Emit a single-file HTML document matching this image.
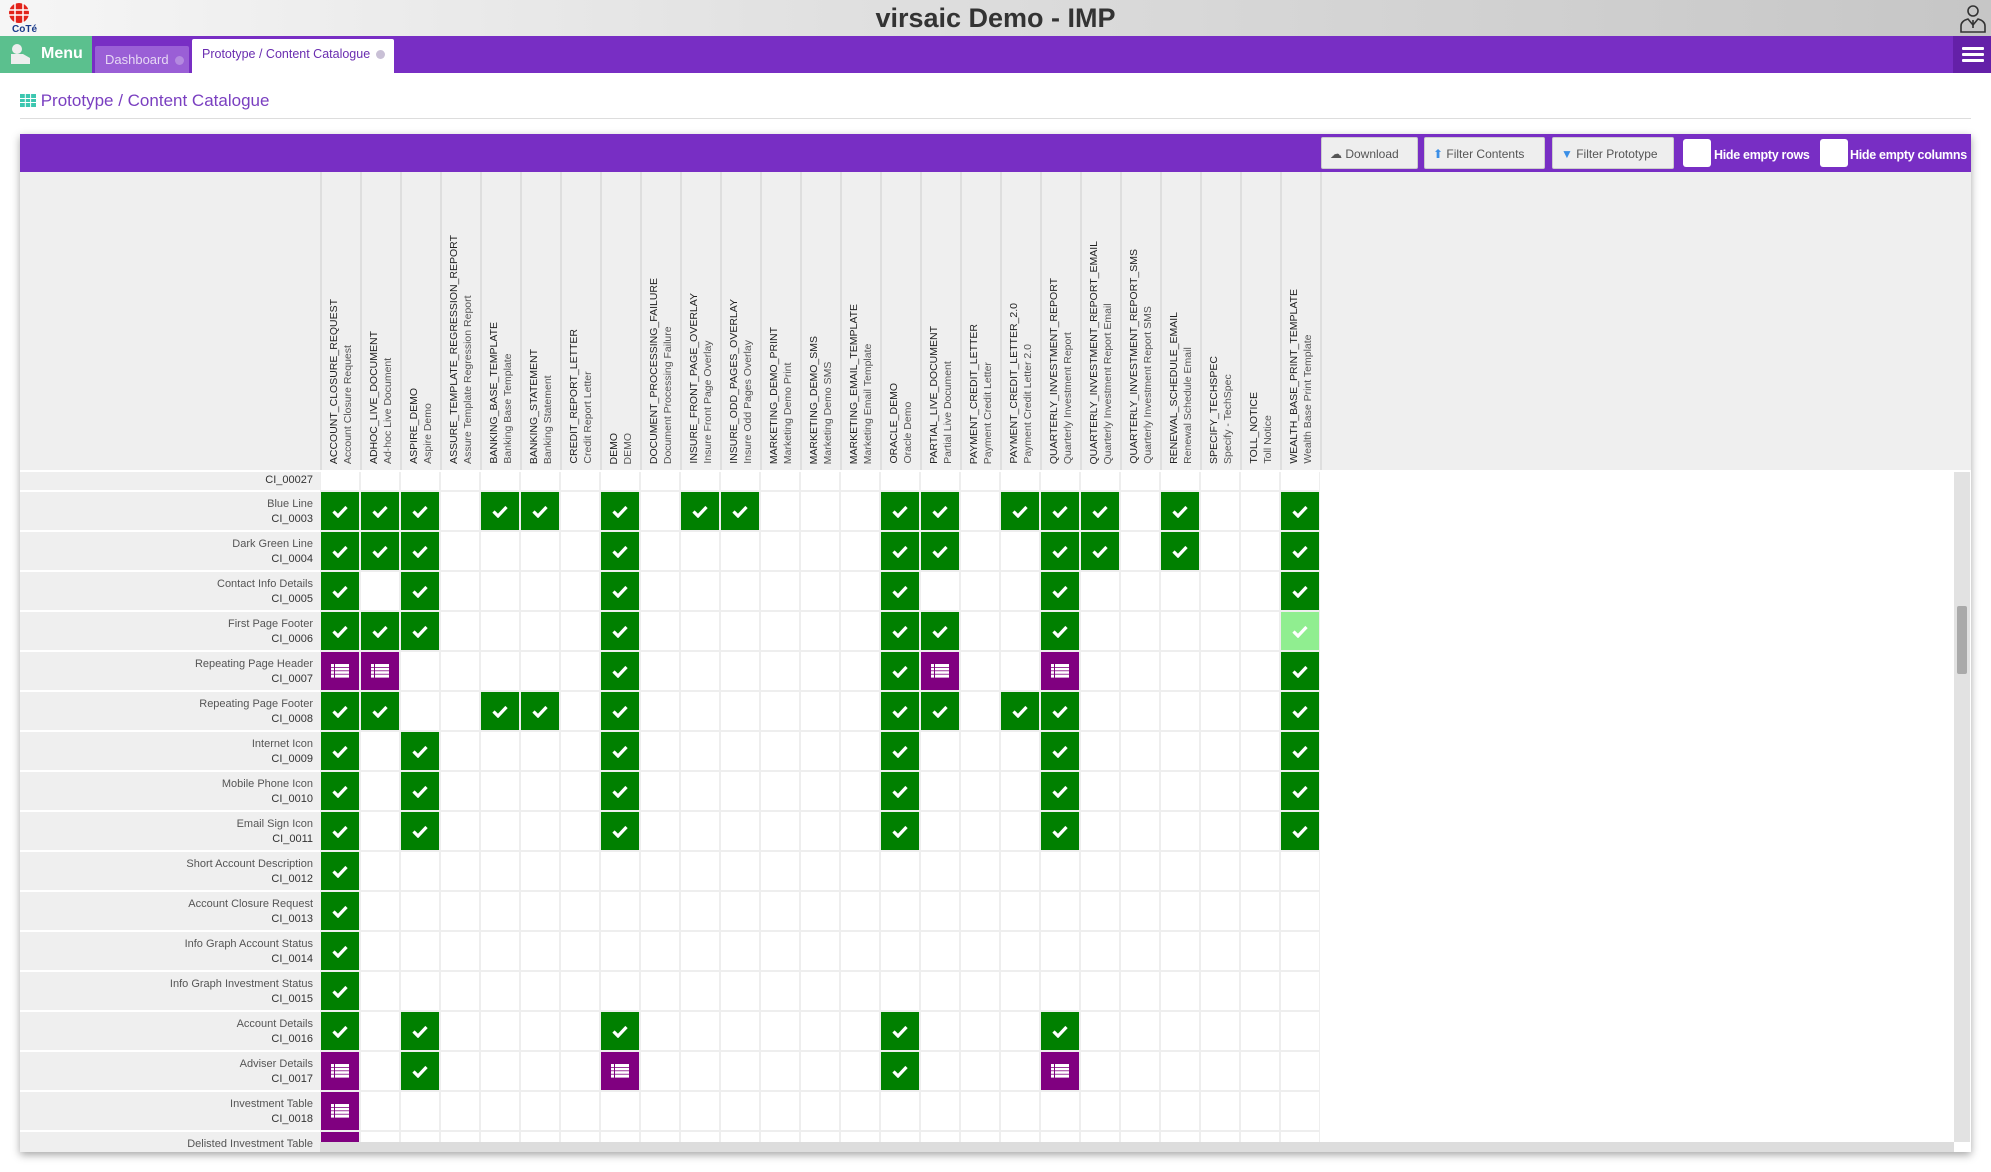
<!DOCTYPE html>
<html><head><meta charset="utf-8">
<style>
*{box-sizing:border-box;margin:0;padding:0}
body{width:1991px;height:1172px;overflow:hidden;background:#fff;font-family:"Liberation Sans",sans-serif;position:relative}
.top{position:absolute;left:0;top:0;width:1991px;height:36px;background:linear-gradient(to right,#f6f6f6,#dcdcdc 50%,#c6c6c6)}
.top h1{position:absolute;left:0;width:1991px;top:3px;text-align:center;font-size:27px;font-weight:bold;color:#333}
.nav{position:absolute;left:0;top:36px;width:1991px;height:37px;background:#782ec4}
.menu{position:absolute;left:0;top:0;width:92px;height:37px;background:#5bc08e;color:#fff;font-size:16px;font-weight:bold}
.tab1{position:absolute;left:95px;top:10px;width:94px;height:27px;background:#9a5fd6;color:#e6d8f4;font-size:13px;padding:6px 0 0 10px;border-radius:2px 2px 0 0}
.tab2{position:absolute;left:192px;top:3px;width:202px;height:34px;background:#fff;color:#6a2db0;font-size:12.5px;padding:8px 0 0 10px;border-radius:2px 2px 0 0}
.x{display:inline-block;width:9px;height:9px;border-radius:50%;background:#c9c0d6;margin-left:6px;vertical-align:-1px}
.ham{position:absolute;right:0;top:0;width:38px;height:37px;background:#6420a8}
.ham i{position:absolute;left:9px;width:22px;height:3px;background:#fff;border-radius:1px}
.ptitle{position:absolute;left:20px;top:91px;font-size:17px;color:#7a3fc0}
.hr{position:absolute;left:20px;top:118px;width:1951px;height:1px;background:#ddd}
.card{position:absolute;left:20px;top:134px;width:1951px;height:1018px;box-shadow:0 3px 8px rgba(0,0,0,.35);background:#fff;overflow:hidden}
.bar{position:absolute;left:0;top:0;width:1951px;height:38px;background:#782ec4}
.btn{position:absolute;top:3px;height:32px;background:#eee;border:1px solid #ccc;border-radius:2px;color:#555;font-size:12px;padding:9px 0 0 8px}
.cb{position:absolute;top:5px;width:28px;height:28px;background:#fff;border-radius:3px}
.lbl{position:absolute;top:14px;color:#fff;font-size:12.5px;font-weight:bold;letter-spacing:-.3px}
.head{position:absolute;left:0;top:38px;width:1951px;height:298px;background:#efefef}
.hc{position:absolute;top:0;width:40px;height:298px;border-left:2px solid #dedede}
.hc div{position:absolute;left:5px;bottom:6px;writing-mode:vertical-rl;transform:rotate(180deg);font-size:10.5px;line-height:14px;color:#222;white-space:nowrap}
.hc div span{color:#555;font-size:10.5px}
.rows{position:absolute;left:0;top:338px;width:300px}
.rl{position:absolute;left:0;width:300px;height:38px;background:#efefef;text-align:right;padding-right:7px;font-size:11px;line-height:15px;color:#555;padding-top:5px}
.rl b{font-weight:normal;color:#333}
.vs{position:absolute;left:1934px;top:338px;width:16px;height:670px;background:#e2e2e2}
.vs i{position:absolute;left:3px;top:134px;width:10px;height:68px;background:#aaa;border-radius:2px}
.hs{position:absolute;left:300px;top:1008px;width:1634px;height:10px;background:#ddd}
</style></head><body>
<div class="top">
<svg style="position:absolute;left:3px;top:2px" width="40" height="32" viewBox="0 0 40 32"><circle cx="16" cy="11" r="10" fill="#e2231a"/><path d="M6 8h20M6 13h20M12 1v20M20 1v20" stroke="#fff" stroke-width="1.5"/><text x="9" y="30" font-size="10" font-weight="bold" fill="#1a3a8a" font-family="Liberation Sans">CoTé</text></svg>
<h1>virsaic Demo - IMP</h1>
<svg style="position:absolute;left:1958px;top:3px" width="30" height="30" viewBox="0 0 30 30" fill="none" stroke="#333" stroke-width="1.6"><circle cx="15" cy="8" r="5"/><path d="M3 29v-6q0-5 7-7l5 6 5-6q7 2 7 7v6z"/><path d="M15 17v8"/></svg>
</div>
<div class="nav">
<div class="menu"><svg style="position:absolute;left:10px;top:7px" width="22" height="22" viewBox="0 0 22 22" fill="#eee"><circle cx="7" cy="6" r="5"/><path d="M1 21V11h12l7 4v6z"/></svg><span style="position:absolute;left:41px;top:9px">Menu</span></div>
<div class="tab1">Dashboard<span class="x" style="background:#b48ae0"></span></div>
<div class="tab2">Prototype / Content Catalogue<span class="x"></span></div>
<div class="ham"><i style="top:11px"></i><i style="top:17px"></i><i style="top:23px"></i></div>
</div>
<div class="ptitle"><svg width="16" height="13" viewBox="0 0 16 13" style="vertical-align:-1px"><rect width="16" height="13" fill="#3cc7b0"/><path d="M0 4.5h16M0 8.5h16M5.3 0v13M10.6 0v13" stroke="#fff" stroke-width="1"/></svg> Prototype / Content Catalogue</div>
<div class="hr"></div>
<div class="card">
<div class="bar">
<div class="btn" style="left:1301px;width:97px">☁ Download</div>
<div class="btn" style="left:1404px;width:121px"><span style="color:#3a8ee6">⬆</span> Filter Contents</div>
<div class="btn" style="left:1532px;width:122px"><span style="color:#3a8ee6">▼</span> Filter Prototype</div>
<div class="cb" style="left:1663px"></div><div class="lbl" style="left:1694px">Hide empty rows</div>
<div class="cb" style="left:1800px"></div><div class="lbl" style="left:1830px">Hide empty columns</div>
</div>
<div class="head" id="head">
<div class="hc" style="left:300px"><div>ACCOUNT_CLOSURE_REQUEST<br><span>Account Closure Request</span></div></div>
<div class="hc" style="left:340px"><div>ADHOC_LIVE_DOCUMENT<br><span>Ad-hoc Live Document</span></div></div>
<div class="hc" style="left:380px"><div>ASPIRE_DEMO<br><span>Aspire Demo</span></div></div>
<div class="hc" style="left:420px"><div>ASSURE_TEMPLATE_REGRESSION_REPORT<br><span>Assure Template Regression Report</span></div></div>
<div class="hc" style="left:460px"><div>BANKING_BASE_TEMPLATE<br><span>Banking Base Template</span></div></div>
<div class="hc" style="left:500px"><div>BANKING_STATEMENT<br><span>Banking Statement</span></div></div>
<div class="hc" style="left:540px"><div>CREDIT_REPORT_LETTER<br><span>Credit Report Letter</span></div></div>
<div class="hc" style="left:580px"><div>DEMO<br><span>DEMO</span></div></div>
<div class="hc" style="left:620px"><div>DOCUMENT_PROCESSING_FAILURE<br><span>Document Processing Failure</span></div></div>
<div class="hc" style="left:660px"><div>INSURE_FRONT_PAGE_OVERLAY<br><span>Insure Front Page Overlay</span></div></div>
<div class="hc" style="left:700px"><div>INSURE_ODD_PAGES_OVERLAY<br><span>Insure Odd Pages Overlay</span></div></div>
<div class="hc" style="left:740px"><div>MARKETING_DEMO_PRINT<br><span>Marketing Demo Print</span></div></div>
<div class="hc" style="left:780px"><div>MARKETING_DEMO_SMS<br><span>Marketing Demo SMS</span></div></div>
<div class="hc" style="left:820px"><div>MARKETING_EMAIL_TEMPLATE<br><span>Marketing Email Template</span></div></div>
<div class="hc" style="left:860px"><div>ORACLE_DEMO<br><span>Oracle Demo</span></div></div>
<div class="hc" style="left:900px"><div>PARTIAL_LIVE_DOCUMENT<br><span>Partial Live Document</span></div></div>
<div class="hc" style="left:940px"><div>PAYMENT_CREDIT_LETTER<br><span>Payment Credit Letter</span></div></div>
<div class="hc" style="left:980px"><div>PAYMENT_CREDIT_LETTER_2.0<br><span>Payment Credit Letter 2.0</span></div></div>
<div class="hc" style="left:1020px"><div>QUARTERLY_INVESTMENT_REPORT<br><span>Quarterly Investment Report</span></div></div>
<div class="hc" style="left:1060px"><div>QUARTERLY_INVESTMENT_REPORT_EMAIL<br><span>Quarterly Investment Report Email</span></div></div>
<div class="hc" style="left:1100px"><div>QUARTERLY_INVESTMENT_REPORT_SMS<br><span>Quarterly Investment Report SMS</span></div></div>
<div class="hc" style="left:1140px"><div>RENEWAL_SCHEDULE_EMAIL<br><span>Renewal Schedule Email</span></div></div>
<div class="hc" style="left:1180px"><div>SPECIFY_TECHSPEC<br><span>Specify - TechSpec</span></div></div>
<div class="hc" style="left:1220px"><div>TOLL_NOTICE<br><span>Toll Notice</span></div></div>
<div class="hc" style="left:1260px"><div>WEALTH_BASE_PRINT_TEMPLATE<br><span>Wealth Base Print Template</span></div></div>
<div class="hc" style="left:1300px"></div>
</div>
<div class="rows">
<div class="rl" style="top:0;height:18px;padding-top:1px"><b>CI_00027</b></div>
<div class="rl" style="top:20px">Blue Line<br><b>CI_0003</b></div>
<div class="rl" style="top:60px">Dark Green Line<br><b>CI_0004</b></div>
<div class="rl" style="top:100px">Contact Info Details<br><b>CI_0005</b></div>
<div class="rl" style="top:140px">First Page Footer<br><b>CI_0006</b></div>
<div class="rl" style="top:180px">Repeating Page Header<br><b>CI_0007</b></div>
<div class="rl" style="top:220px">Repeating Page Footer<br><b>CI_0008</b></div>
<div class="rl" style="top:260px">Internet Icon<br><b>CI_0009</b></div>
<div class="rl" style="top:300px">Mobile Phone Icon<br><b>CI_0010</b></div>
<div class="rl" style="top:340px">Email Sign Icon<br><b>CI_0011</b></div>
<div class="rl" style="top:380px">Short Account Description<br><b>CI_0012</b></div>
<div class="rl" style="top:420px">Account Closure Request<br><b>CI_0013</b></div>
<div class="rl" style="top:460px">Info Graph Account Status<br><b>CI_0014</b></div>
<div class="rl" style="top:500px">Info Graph Investment Status<br><b>CI_0015</b></div>
<div class="rl" style="top:540px">Account Details<br><b>CI_0016</b></div>
<div class="rl" style="top:580px">Adviser Details<br><b>CI_0017</b></div>
<div class="rl" style="top:620px">Investment Table<br><b>CI_0018</b></div>
<div class="rl" style="top:660px">Delisted Investment Table<br><b>CI_0019</b></div>
</div>
<div id="grid" style="position:absolute;left:300px;top:338px;width:1000px;height:670px;overflow:hidden;background:#fff"></div>
<div class="vs"><i></i></div>
<div class="hs"></div>
</div>
<script>
(function(){
var G=document.getElementById('grid'),h='';
var chk='<svg width="16" height="14" viewBox="0 0 16 14" style="position:absolute;left:11px;top:12px"><path d="M1.5 7.5l4.5 4.5 8.5-9" fill="none" stroke="#fff" stroke-width="3.2"/></svg>';
var lst='<svg width="18" height="14" viewBox="0 0 18 14" style="position:absolute;left:10px;top:12px" fill="#fff"><rect x="0" y="0" width="18" height="3"/><rect x="0" y="3.8" width="18" height="2.6"/><rect x="0" y="7.2" width="18" height="2.6"/><rect x="0" y="10.6" width="18" height="3"/><rect x="3" y="0" width="1" height="14" fill="#800080"/></svg>';
var D=[
{},
{0:1,1:1,2:1,4:1,5:1,7:1,9:1,10:1,14:1,15:1,17:1,18:1,19:1,21:1,24:1},
{0:1,1:1,2:1,7:1,14:1,15:1,18:1,19:1,21:1,24:1},
{0:1,2:1,7:1,14:1,18:1,24:1},
{0:1,1:1,2:1,7:1,14:1,15:1,18:1,24:3},
{0:2,1:2,7:1,14:1,15:2,18:2,24:1},
{0:1,1:1,4:1,5:1,7:1,14:1,15:1,17:1,18:1,24:1},
{0:1,2:1,7:1,14:1,18:1,24:1},
{0:1,2:1,7:1,14:1,18:1,24:1},
{0:1,2:1,7:1,14:1,18:1,24:1},
{0:1},{0:1},{0:1},{0:1},
{0:1,2:1,7:1,14:1,18:1},
{0:2,2:1,7:2,14:1,18:2},
{0:2},{0:2}];
for(var r=0;r<D.length;r++){var ty=r==0?0:20+(r-1)*40,hh=r==0?18:38;
for(var c=0;c<25;c++){var v=D[r][c]||0;var bg=v==1?'#008000':v==2?'#800080':v==3?'#90ee90':'#fff';
h+='<div style="position:absolute;left:'+(c*40+1)+'px;top:'+ty+'px;width:38px;height:'+hh+'px;background:'+bg+';box-shadow:0 0 0 1px #eee">'+(v==1||v==3?chk:v==2?lst:'')+'</div>';}}
G.innerHTML=h;
})();
</script>
</body></html>
